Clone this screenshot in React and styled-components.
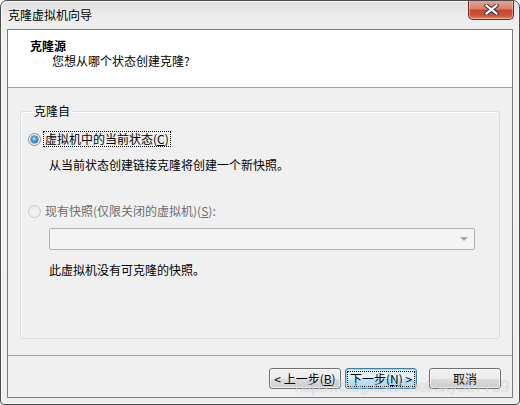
import React from 'react'
import styled, { createGlobalStyle } from 'styled-components'

const GlobalStyle = createGlobalStyle`
  html, body {
    margin: 0;
    padding: 0;
    background: #ffffff;
  }
  body {
    font-family: "Noto Sans CJK SC", "DejaVu Sans", sans-serif;
    font-size: 12px;
    color: #000;
  }
`

const font = `"Noto Sans CJK SC", "Liberation Sans", sans-serif`

const Window = styled.div`
  position: relative;
  box-sizing: border-box;
  width: 520px;
  height: 405px;
  display: flex;
  flex-direction: column;
  border: 1px solid #4b4b4b;
  border-radius: 7px 7px 4px 4px;
  padding: 0 6px 6px 6px;
  background: linear-gradient(180deg, #dedede 0px, #ececec 14px, #f2f2f2 40px, #eeeeee 100%);
  box-shadow: inset 1px 1px 0 #fafafa, inset -1px -1px 0 #f7f7f7;
  overflow: hidden;
  font-family: ${font};
`

const TitleBar = styled.div`
  height: 28px;
  display: flex;
  align-items: center;
  flex-shrink: 0;
`

const TitleText = styled.span`
  padding-left: 1px;
  font-size: 12px;
  line-height: 14px;
  color: #000;
`

const CloseButton = styled.div`
  margin-left: auto;
  align-self: flex-start;
  margin-top: -1px;
  margin-right: -1px;
  box-sizing: border-box;
  width: 46px;
  height: 20px;
  display: flex;
  align-items: center;
  justify-content: center;
  border: 1px solid #6e2a20;
  border-top: none;
  border-radius: 0 0 5px 5px;
  background: linear-gradient(180deg, #e8a898 0%, #d8806a 45%, #c7452d 55%, #d2583c 85%, #e49272 100%);
  box-shadow: inset 0 0 0 1px rgba(255, 220, 200, 0.45);
`

const Client = styled.div`
  flex: 1;
  display: flex;
  flex-direction: column;
  border: 1px solid #7c7c7c;
  background: #f0f0f0;
  min-height: 0;
`

const Header = styled.div`
  height: 58px;
  box-sizing: border-box;
  background: #ffffff;
  border-bottom: 1px solid #a0a0a0;
  padding: 8px 0 0 22px;
  flex-shrink: 0;
`

const HeaderTitle = styled.div`
  font-weight: bold;
  font-size: 12px;
  line-height: 15px;
`

const HeaderSub = styled.div`
  font-size: 12px;
  line-height: 15px;
  padding-left: 22px;
`

const Body = styled.div`
  flex: 1;
  padding: 16px 12px 0 12px;
`

const GroupBox = styled.fieldset`
  margin: 0;
  padding: 0 0 0 7px;
  height: 235px;
  box-sizing: border-box;
  border: 1px solid #d5dfe5;
  border-radius: 3px;
  box-shadow: inset 1px 1px 0 #ffffff;
  min-width: 0;
`

const Legend = styled.legend`
  padding: 0 3px;
  margin-left: 3px;
  font-size: 12px;
  line-height: 14px;
`

const RadioRow = styled.div`
  display: flex;
  align-items: center;
  gap: 3px;
  height: 14px;
  margin-top: ${p => p.$top}px;
  color: ${p => (p.$disabled ? '#6d6d6d' : '#000')};
`

const RadioCircle = styled.span`
  position: relative;
  box-sizing: border-box;
  width: 13px;
  height: 13px;
  border-radius: 50%;
  flex-shrink: 0;
  border: 1px solid ${p => (p.$disabled ? '#c8c8c8' : '#8e8f8f')};
  background: ${p =>
    p.$disabled
      ? 'radial-gradient(circle at 50% 60%, #f4f4f4 0%, #e8e8e8 100%)'
      : 'radial-gradient(circle at 50% 60%, #ffffff 0%, #e6e6e6 100%)'};

  &::after {
    content: '';
    display: ${p => (p.$checked ? 'block' : 'none')};
    position: absolute;
    left: 2px;
    top: 2px;
    width: 7px;
    height: 7px;
    border-radius: 50%;
    background: radial-gradient(circle at 45% 40%, #c6ecff 0%, #3d9ce0 40%, #105d9f 100%);
    box-shadow: 0 0 0 0.5px #1b4f7e;
  }
`

const RadioLabel = styled.span`
  font-size: 12px;
  line-height: 14px;
  padding: 0 1px;
  outline: ${p => (p.$focused ? '1px dotted #000' : 'none')};
`

const Mnemonic = styled.span`
  text-decoration: underline;
`

const Hint = styled.div`
  font-size: 12px;
  line-height: 14px;
  margin-top: ${p => p.$top}px;
  padding-left: 21px;
`

const Combo = styled.div`
  box-sizing: border-box;
  margin: 10px 0 0 21px;
  width: 426px;
  height: 22px;
  border: 1px solid #adb2b5;
  border-radius: 2px;
  background: #f4f4f4;
  display: flex;
  align-items: center;
  justify-content: flex-end;
  padding-right: 6px;
`

const ComboArrow = styled.span`
  width: 0;
  height: 0;
  border-left: 4px solid transparent;
  border-right: 4px solid transparent;
  border-top: 4px solid #a6a6a6;
`

const Footer = styled.div`
  flex-shrink: 0;
  height: 42px;
  box-sizing: border-box;
  border-top: 1px solid #a0a0a0;
  display: flex;
  justify-content: flex-end;
  align-items: flex-start;
  padding: 12px 11px 0 0;
`

const Button = styled.button`
  box-sizing: border-box;
  width: 72px;
  height: 21px;
  margin-left: ${p => p.$gap}px;
  padding: 0;
  font-family: ${font};
  font-size: 12px;
  line-height: 14px;
  color: #000;
  border-radius: 3px;
  border: 1px solid ${p => (p.$primary ? '#3c7fb1' : '#707070')};
  background: ${p =>
    p.$primary
      ? 'linear-gradient(180deg, #eaf6fd 0%, #d9f0fc 50%, #bee6fd 50%, #a7d9f5 100%)'
      : 'linear-gradient(180deg, #f2f2f2 0%, #ebebeb 50%, #dddddd 50%, #cfcfcf 100%)'};
  box-shadow: inset 0 0 0 1px ${p => (p.$primary ? '#97d9ff' : 'rgba(255,255,255,0.7)')};
  display: flex;
  align-items: center;
  justify-content: center;
`

const ButtonInner = styled.span`
  padding: 0 2px;
  outline: ${p => (p.$focused ? '1px dotted #000' : 'none')};
`

const Watermark = styled.div`
  position: absolute;
  right: 10px;
  bottom: 8px;
  font-family: "Liberation Sans", Arial, sans-serif;
  font-size: 17px;
  line-height: 18px;
  letter-spacing: -0.8px;
  color: rgba(255, 255, 255, 0.55);
  text-shadow: 0 0 1px rgba(0, 0, 0, 0.22);
  pointer-events: none;
`

function CloseIcon() {
  return (
    <svg width="15" height="11" viewBox="0 0 15 11">
      <path d="M2.5 1.5 L12.5 9.5 M12.5 1.5 L2.5 9.5" stroke="#3a3a4a" strokeWidth="4.2" strokeLinecap="square" />
      <path d="M2.5 1.5 L12.5 9.5 M12.5 1.5 L2.5 9.5" stroke="#ffffff" strokeWidth="2.2" strokeLinecap="square" />
    </svg>
  )
}

export default function App() {
  return (
    <>
      <GlobalStyle />
      <Window>
        <TitleBar>
          <TitleText>克隆虚拟机向导</TitleText>
          <CloseButton>
            <CloseIcon />
          </CloseButton>
        </TitleBar>
        <Client>
          <Header>
            <HeaderTitle>克隆源</HeaderTitle>
            <HeaderSub>您想从哪个状态创建克隆?</HeaderSub>
          </Header>
          <Body>
            <GroupBox>
              <Legend>克隆自</Legend>
              <RadioRow $top={14}>
                <RadioCircle $checked />
                <RadioLabel $focused>
                  虚拟机中的当前状态(<Mnemonic>C</Mnemonic>)
                </RadioLabel>
              </RadioRow>
              <Hint $top={12}>从当前状态创建链接克隆将创建一个新快照。</Hint>
              <RadioRow $top={32} $disabled>
                <RadioCircle $disabled />
                <RadioLabel>
                  现有快照(仅限关闭的虚拟机)(<Mnemonic>S</Mnemonic>):
                </RadioLabel>
              </RadioRow>
              <Combo>
                <ComboArrow />
              </Combo>
              <Hint $top={13}>此虚拟机没有可克隆的快照。</Hint>
            </GroupBox>
          </Body>
          <Footer>
            <Button $gap={0}>
              <ButtonInner>&lt; 上一步(<Mnemonic>B</Mnemonic>)</ButtonInner>
            </Button>
            <Button $gap={4} $primary>
              <ButtonInner $focused>下一步(<Mnemonic>N</Mnemonic>) &gt;</ButtonInner>
            </Button>
            <Button $gap={12}>
              <ButtonInner>取消</ButtonInner>
            </Button>
          </Footer>
        </Client>
        <Watermark>https://blog.csdn.net/sky527759</Watermark>
      </Window>
    </>
  )
}
